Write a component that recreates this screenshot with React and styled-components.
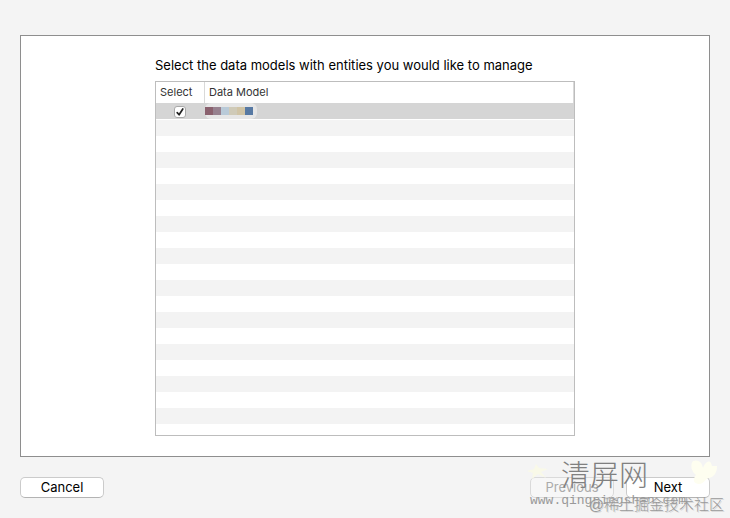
import React, { useState } from "react";
import styled, { createGlobalStyle } from "styled-components";

// empty striped rows under the data rows
const EMPTY_ROWS = 20;

const models = [
  { id: 1, colors: ["#8a616e", "#97818f", "#b9cad8", "#cfcab8", "#d0c4a6", "#5779a3"] },
];

function ModelTable() {
  const [selected, setSelected] = useState([1]);

  const toggle = (id) => {
    setSelected((prev) =>
      prev.includes(id) ? prev.filter((item) => item !== id) : [...prev, id]
    );
  };

  return (
    <TableFrame>
      <Table aria-labelledby="models-title">
        <thead>
          <tr>
            <HeadCell $narrow>Select</HeadCell>
            <HeadCell>Data Model</HeadCell>
          </tr>
        </thead>
        <tbody>
          {models.map((model) => (
            <ModelRow key={model.id}>
              <td>
                <CheckLabel>
                  <CheckBox
                    type="checkbox"
                    aria-label="Select data model"
                    checked={selected.includes(model.id)}
                    onChange={() => toggle(model.id)}
                  />
                  {selected.includes(model.id) && (
                    <CheckMark viewBox="0 0 12 12" aria-hidden="true">
                      <path d="M3.2 6.6 L5.1 8.8 L8.8 3" />
                    </CheckMark>
                  )}
                </CheckLabel>
              </td>
              <td>
                <HiddenName>
                  {model.colors.map((color) => (
                    <Block key={color} $color={color} />
                  ))}
                </HiddenName>
              </td>
            </ModelRow>
          ))}
          {Array.from({ length: EMPTY_ROWS }, (_, i) => (
            <EmptyRow key={i} $last={i === EMPTY_ROWS - 1}>
              <td colSpan={2}></td>
            </EmptyRow>
          ))}
        </tbody>
      </Table>
    </TableFrame>
  );
}

function Watermark() {
  return (
    <Marks>
      <Spark viewBox="0 0 24 20" aria-hidden="true">
        <path d="M10 3 L13 7 L22 8 L15 11 L20 17 L12 13 L6 18 L7 12 L1 10 L8 8 Z" />
      </Spark>
      <SiteName>清屏网</SiteName>
      <Leaf viewBox="0 0 28 28" aria-hidden="true">
        <path d="M3 2 C8 0 12 3 13 9 C15 3 19 1 21 4 L22 7 L27 7 C27 14 24 18 19 19 C15 20 14 25 9 25 C4 25 2 21 6 16 C1 12 0 6 3 2 Z" />
      </Leaf>
      <SiteUrl>www.qingpingshan.com</SiteUrl>
      <Community>@稀土掘金技术社区</Community>
    </Marks>
  );
}

export default function App() {
  return (
    <>
      <GlobalStyle />
      <Dialog>
        <Panel>
          <Content>
            <Title id="models-title">
              Select the data models with entities you would like to manage
            </Title>
            <ModelTable />
          </Content>
        </Panel>
        <Footer>
          <Button type="button">Cancel</Button>
          <ButtonGroup>
            <Button type="button" disabled>Previous</Button>
            <Button type="button">Next</Button>
          </ButtonGroup>
          <Watermark />
        </Footer>
      </Dialog>
    </>
  );
}

const GlobalStyle = createGlobalStyle`
  * {
    box-sizing: border-box;
  }
  body {
    margin: 0;
    background: #f4f4f4;
    color: #000;
    font-family: Inter, "Liberation Sans", "Noto Sans CJK SC", sans-serif;
    font-size: 13px;
  }
`
const Dialog = styled.main`
  padding: 35px 20px 20px;
`
const Panel = styled.section`
  display: flex;
  justify-content: center;
  padding: 20px;
  border: 1px solid #8e8e8e;
  background: #fff;
`
const Content = styled.div`
  width: 100%;
  max-width: 420px;
`
const Title = styled.h1`
  margin: 0 0 7px;
  font-size: 13px;
  font-weight: 400;
  line-height: 18px;
  white-space: nowrap;
`
const TableFrame = styled.div`
  border: 1px solid #bdbdbd;
  background: #fff;
`
const Table = styled.table`
  width: 100%;
  table-layout: fixed;
  border-collapse: collapse;

  td {
    padding: 0;
  }
`
const HeadCell = styled.th`
  width: ${(props) => (props.$narrow ? "49px" : "auto")};
  height: 21px;
  padding: 0 4px;
  color: #333;
  font-size: 11px;
  font-weight: 400;
  line-height: 20px;
  text-align: left;
  vertical-align: top;
  box-shadow: inset -1px 0 #d9d9d9;
`
const ModelRow = styled.tr`
  height: 17px;
  background: #d5d5d5;
  box-shadow: inset 0 -1px #fff;

  td {
    vertical-align: top;
  }
`
const EmptyRow = styled.tr`
  height: ${(props) => (props.$last ? "11px" : "16px")};

  &:nth-child(even) {
    background: #f3f3f3;
  }
`
const CheckLabel = styled.label`
  display: grid;
  place-items: center;
  width: 48px;
  height: 17px;
`
const CheckBox = styled.input`
  grid-area: 1 / 1;
  appearance: none;
  width: 12px;
  height: 12px;
  margin: 0;
  border: 1px solid #a9a9a9;
  border-radius: 3px;
  background: #fff;
`
const CheckMark = styled.svg`
  grid-area: 1 / 1;
  width: 12px;
  height: 12px;
  fill: none;
  stroke: #222;
  stroke-width: 1.7;
  stroke-linecap: round;
  stroke-linejoin: round;
  pointer-events: none;
`
const HiddenName = styled.div`
  display: flex;
  align-items: center;
  width: 52px;
  height: 16px;
  border-radius: 6px;
  background: #e6e6e6;
`
const Block = styled.span`
  width: 8px;
  height: 8px;
  background: ${(props) => props.$color};
`
const Footer = styled.footer`
  position: relative;
  display: flex;
  justify-content: space-between;
  padding-top: 20px;
`
const ButtonGroup = styled.div`
  display: flex;
  gap: 12px;
`
const Button = styled.button`
  width: 84px;
  height: 21px;
  padding: 0;
  border: 1px solid #cbcbcb;
  border-bottom-color: #b3b3b3;
  border-radius: 5px;
  background: #fff;
  color: #000;
  font: inherit;
  line-height: 19px;

  &:disabled {
    border-color: #dadada;
    background: #f7f7f7;
    color: #ababab;
  }
`
// site marks printed over the footer buttons
const Marks = styled.div`
  position: absolute;
  top: 0;
  right: -16px;
  width: 200px;
  height: 60px;
  pointer-events: none;
  white-space: nowrap;
`
const Spark = styled.svg`
  position: absolute;
  top: 4px;
  left: 0;
  width: 24px;
  fill: #f9f9e8;
`
const Leaf = styled.svg`
  position: absolute;
  top: 2px;
  right: 8px;
  width: 28px;
  fill: #fefef0;
`
const SiteName = styled.span`
  position: absolute;
  top: 0;
  left: 35px;
  color: #808080;
  font-family: "Noto Sans CJK SC", sans-serif;
  font-size: 29px;
  font-weight: 300;
  line-height: 32px;
`
const SiteUrl = styled.span`
  position: absolute;
  top: 36px;
  left: 4px;
  color: #999;
  font-family: "Liberation Mono", monospace;
  font-size: 13px;
  line-height: 16px;
`
const Community = styled.span`
  position: absolute;
  top: 38px;
  right: 2px;
  color: #999;
  font-family: "Liberation Sans", "Noto Sans CJK SC", sans-serif;
  font-size: 15px;
  font-weight: 300;
  line-height: 20px;
  text-shadow: 1px 1px 0 #d8d8d8;
`
